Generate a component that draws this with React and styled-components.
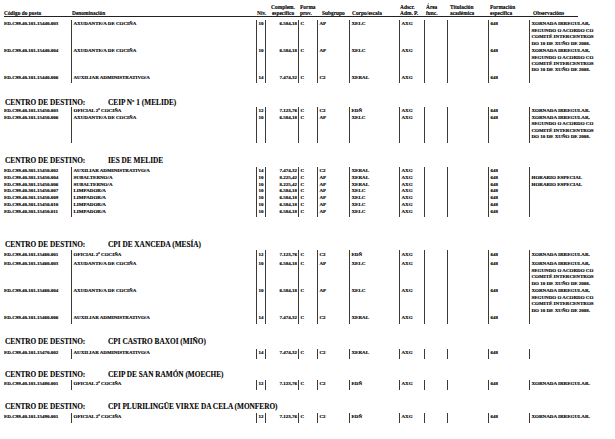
import React from 'react'
import styled, { createGlobalStyle } from 'styled-components'

const GlobalStyle = createGlobalStyle`
  body {
    margin: 0;
    background: #ffffff;
    font-family: 'Liberation Serif', 'DejaVu Serif', serif;
  }
`

// column widths of the listing: code, denominación, niv, complem, forma,
// subgrupo, corpo, adscr, área, titulación, formación
const COLS = '67px 185px 9px 33px 19px 32px 50px 25px 23px 41px 41px'

const Page = styled.div`
  width: 615px;
  height: 439px;
  overflow: hidden;
  box-sizing: border-box;
  padding: 3.5px 0 0 4px;
  font-family: 'Liberation Serif', 'DejaVu Serif', serif;
  font-weight: 700;
  color: #000;
`

const Head = styled.div`
  display: grid;
  grid-template-columns: ${COLS} 1fr;
  width: 574px;
  align-items: end;
  border-bottom: 1px solid #222;
  font-size: 5.4px;
  line-height: 6px;
  -webkit-text-stroke: 0.1px #000;
`

const HeadCell = styled.div`
  white-space: nowrap;
  padding-left: ${p => p.$pad || 0}px;
  text-align: ${p => p.$align || 'left'};
`

const Section = styled.section`
  margin-top: ${p => p.$top}px;
`

const Heading = styled.div`
  display: flex;
  margin: 0 0 ${p => p.$gap}px 1px;
  font-size: 7.3px;
  line-height: 8px;
  white-space: nowrap;
  -webkit-text-stroke: 0.1px #000;
`

const HeadingLabel = styled.span`
  width: 103px;
`

const Row = styled.div`
  display: grid;
  grid-template-columns: ${COLS} 60px;
  font-size: 5px;
  line-height: 6.4px;
  -webkit-text-stroke: 0.15px #000;

  & > * {
    padding-top: ${p => (p.$first ? 1.5 : 0)}px;
    padding-bottom: ${p => 0.3 + p.$extra + (p.$last ? 1.5 : 0)}px;
  }
`

const Cell = styled.div`
  white-space: nowrap;
  border-left: ${p => (p.$line ? '1px solid #3a3a3a' : 'none')};
  padding-left: ${p => (p.$pad === undefined ? 1.5 : p.$pad)}px;
  padding-right: ${p => p.$right || 0}px;
  text-align: ${p => p.$align || 'left'};
`

const XORN = ['XORNADA IRREGULAR,', 'SEGUNDO O ACORDO CO', 'COMITÉ INTERCENTROS', 'DO 10 DE XUÑO DE 2008.']
const XORN1 = ['XORNADA IRREGULAR.']
const HOR = ['HORARIO ESPECIAL']

const axud = (code, obs = XORN) => ({ code, den: 'AXUDANTE/A DE COCIÑA', niv: '10', comp: '6.584,18', sub: 'AP', corpo: 'XELC', obs })
const aux = code => ({ code, den: 'AUXILIAR ADMINISTRATIVO/A', niv: '14', comp: '7.474,32', sub: 'C2', corpo: 'XERAL', obs: [] })
const ofic = (code, extra = 0) => ({ code, den: 'OFICIAL 2ª COCIÑA', niv: '12', comp: '7.123,76', sub: 'C2', corpo: 'EDÑ', obs: XORN1, extra })
const subal = code => ({ code, den: 'SUBALTERNO/A', niv: '10', comp: '8.225,42', sub: 'AP', corpo: 'XERAL', obs: HOR })
const limp = code => ({ code, den: 'LIMPADOR/A', niv: '10', comp: '6.584,18', sub: 'AP', corpo: 'XELC', obs: [] })

const sections = [
  {
    top: 3.3,
    rows: [axud('ED.C99.40.101.15440.003'), axud('ED.C99.40.101.15440.004'), aux('ED.C99.40.101.15440.006')],
  },
  {
    top: 15.2, gap: 0, name: 'CEIP Nº 1 (MELIDE)',
    rows: [ofic('ED.C99.40.101.15450.003'), axud('ED.C99.40.101.15450.006')],
  },
  {
    top: 13.4, gap: 2.3, name: 'IES DE MELIDE',
    rows: [
      aux('ED.C99.40.301.15450.002'),
      subal('ED.C99.40.301.15450.004'),
      subal('ED.C99.40.301.15450.006'),
      limp('ED.C99.40.301.15450.007'),
      limp('ED.C99.40.301.15450.009'),
      limp('ED.C99.40.301.15450.010'),
      limp('ED.C99.40.301.15450.011'),
    ],
  },
  {
    top: 23.8, gap: 1.8, name: 'CPI DE XANCEDA (MESÍA)',
    rows: [
      ofic('ED.C99.40.101.15460.001', 2.9),
      axud('ED.C99.40.101.15460.003'),
      axud('ED.C99.40.101.15460.004'),
      aux('ED.C99.40.101.15460.006'),
    ],
  },
  { top: 14.1, gap: 3.3, name: 'CPI CASTRO BAXOI (MIÑO)', rows: [aux('ED.C99.40.101.15470.002')] },
  { top: 12, gap: 1.3, name: 'CEIP DE SAN RAMÓN (MOECHE)', rows: [ofic('ED.C99.40.101.15480.001')] },
  { top: 13, gap: 2.3, name: 'CPI PLURILINGÜE VIRXE DA CELA (MONFERO)', rows: [ofic('ED.C99.40.101.15490.001')] },
]

function Lines({ lines }) {
  return lines.map((l, i) => <div key={i}>{l}</div>)
}

function Posto({ r, first, last }) {
  const extra = (r.obs.length > 1 ? 1 : 0) + (r.extra || 0)
  return (
    <Row $first={first} $last={last} $extra={extra}>
      <Cell $pad={0}>{r.code}</Cell>
      <Cell $line>{r.den}</Cell>
      <Cell $line $pad={0} $align="center">{r.niv}</Cell>
      <Cell $line $align="right" $right={1}>{r.comp}</Cell>
      <Cell $line>C</Cell>
      <Cell $line>{r.sub}</Cell>
      <Cell $line>{r.corpo}</Cell>
      <Cell $line>AXG</Cell>
      <Cell $line />
      <Cell $line />
      <Cell $line>648</Cell>
      <Cell $line><Lines lines={r.obs} /></Cell>
    </Row>
  )
}

export default function App() {
  return (
    <Page>
      <GlobalStyle />
      <Head>
        <HeadCell>Código do posto</HeadCell>
        <HeadCell $pad={1}>Denominación</HeadCell>
        <HeadCell $pad={1}>Niv.</HeadCell>
        <HeadCell $align="center" $pad={3}>Complem.<br />específico</HeadCell>
        <HeadCell $pad={2}>Forma<br />prov.</HeadCell>
        <HeadCell $pad={5}>Subgrupo</HeadCell>
        <HeadCell $pad={3}>Corpo/escala</HeadCell>
        <HeadCell $pad={1}>Adscr.<br />Adm. P.</HeadCell>
        <HeadCell $pad={2}>Área<br />func.</HeadCell>
        <HeadCell $pad={3}>Titulación<br />académica</HeadCell>
        <HeadCell $pad={2}>Formación<br />específica</HeadCell>
        <HeadCell $pad={4}>Observacións</HeadCell>
      </Head>
      {sections.map((s, i) => (
        <Section key={i} $top={s.top}>
          {s.name && (
            <Heading $gap={s.gap}>
              <HeadingLabel>CENTRO DE DESTINO:</HeadingLabel>
              <span>{s.name}</span>
            </Heading>
          )}
          <div>
            {s.rows.map((r, j) => (
              <Posto key={r.code} r={r} first={j === 0} last={j === s.rows.length - 1} />
            ))}
          </div>
        </Section>
      ))}
    </Page>
  )
}
